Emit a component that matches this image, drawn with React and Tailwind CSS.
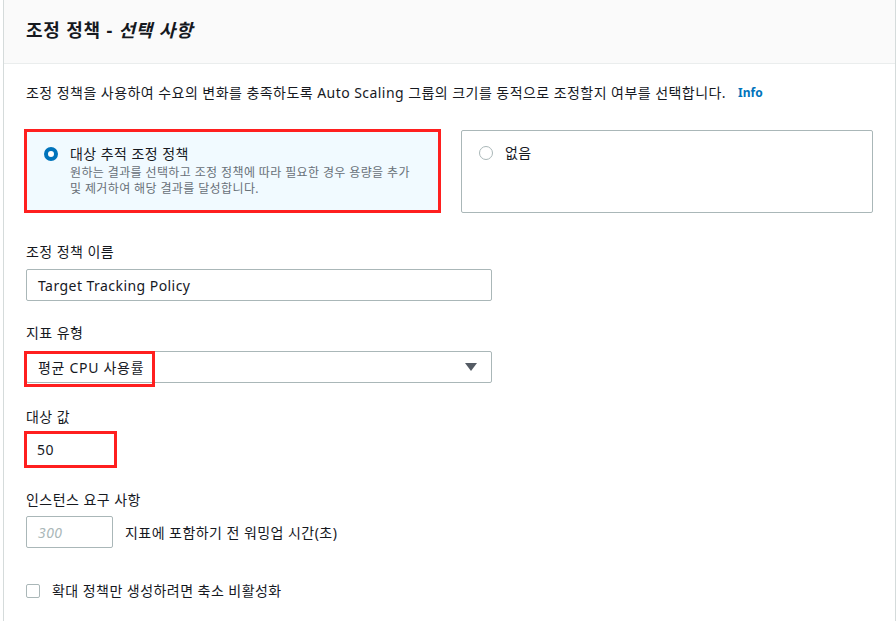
import React from 'react';

const FONT = { fontFamily: '"Noto Sans", "Noto Sans CJK KR", sans-serif' };

function Radio({ checked }) {
  if (checked) {
    return <span className="w-[14px] h-[14px] rounded-full border-[4px] border-[#0073bb] bg-white shrink-0" />;
  }
  return <span className="w-[14px] h-[14px] rounded-full border border-[#aab7b8] bg-white shrink-0" />;
}

function Label({ children, className = '' }) {
  return <div className={`text-[14px] leading-[20px] tracking-[0.45px] text-[#16191f] ${className}`}>{children}</div>;
}

export default function App() {
  return (
    <div className="w-[896px] h-[621px] bg-white overflow-hidden pl-[3px]" style={FONT}>
      <div className="h-full border-l border-r border-[#d5dbdb] flex flex-col">
        {/* header */}
        <div className="h-[64px] shrink-0 bg-[#fafafa] border-b border-[#eaeded] px-[22px] flex items-center">
          <h2 className="text-[18px] font-bold text-[#16191f] tracking-[0.8px] pb-[3px]">
            조정 정책 - <span className="italic">선택 사항</span>
          </h2>
        </div>

        {/* body */}
        <div className="px-[22px] pt-[19px] tracking-[0.45px]">
          <p className="text-[14px] leading-[20px] text-[#16191f] flex items-center">
            조정 정책을 사용하여 수요의 변화를 충족하도록 Auto Scaling 그룹의 크기를 동적으로 조정할지 여부를 선택합니다.
            <span className="ml-[12px] text-[12px] font-bold text-[#0073bb] tracking-normal">Info</span>
          </p>

          <div className="mt-[26px] flex items-start">
            <div className="-ml-[2px] w-[417px] h-[84px] border-[3px] border-[#ff1f1f] bg-[#f1faff] pl-[17px] pt-[12px] flex gap-[12px]">
              <div className="h-[20px] flex items-center">
                <Radio checked />
              </div>
              <div>
                <div className="text-[14px] leading-[20px] text-[#16191f]">대상 추적 조정 정책</div>
                <div className="text-[12px] leading-[16px] tracking-[0.38px] text-[#687078] mt-[1px]">
                  원하는 결과를 선택하고 조정 정책에 따라 필요한 경우 용량을 추가
                  <br />
                  및 제거하여 해당 결과를 달성합니다.
                </div>
              </div>
            </div>
            <div className="ml-[20px] mt-[1px] w-[412px] h-[83px] border border-[#aab7b8] rounded-[2px] pl-[17px] pt-[12px] flex gap-[12px]">
              <div className="h-[20px] flex items-center">
                <Radio />
              </div>
              <div className="text-[14px] leading-[20px] text-[#16191f]">없음</div>
            </div>
          </div>

          <Label className="mt-[29px]">조정 정책 이름</Label>
          <div className="mt-[7px] w-[466px] h-[32px] border border-[#aab7b8] rounded-[2px] pl-[11px] flex items-center text-[14px] text-[#16191f]">
            Target Tracking Policy
          </div>

          <Label className="mt-[22px]">지표 유형</Label>
          <div className="relative mt-[8px] w-[466px] h-[32px] border border-[#aab7b8] rounded-[2px] pl-[11px] pr-[14px] flex items-center justify-between text-[14px] text-[#16191f]">
            <span className="tracking-[0.7px]">평균 CPU 사용률</span>
            <svg width="12" height="8" viewBox="0 0 12 8">
              <path d="M0 0 H12 L6 8 Z" fill="#545b64" />
            </svg>
            <div className="absolute -left-[3px] -top-[1px] w-[131px] h-[36px] border-[3px] border-[#ff1f1f]" />
          </div>

          <Label className="mt-[24px]">대상 값</Label>
          <div className="-ml-[2px] mt-[4px] w-[93px] h-[37px] border-[3px] border-[#ff1f1f] pl-[10px] flex items-center text-[14px] text-[#16191f]">
            50
          </div>

          <Label className="mt-[22px]">인스턴스 요구 사항</Label>
          <div className="mt-[6px] flex items-center">
            <div className="w-[87px] h-[32px] border border-[#aab7b8] rounded-[2px] pl-[11px] flex items-center text-[14px] italic text-[#aab7b8]">
              300
            </div>
            <span className="ml-[12px] text-[14px] text-[#16191f]">지표에 포함하기 전 워밍업 시간(초)</span>
          </div>

          <div className="mt-[33px] flex items-center">
            <span className="w-[14px] h-[14px] border border-[#aab7b8] rounded-[2px] bg-white" />
            <span className="ml-[12px] text-[14px] leading-[20px] text-[#16191f]">확대 정책만 생성하려면 축소 비활성화</span>
          </div>
        </div>
      </div>
    </div>
  );
}
